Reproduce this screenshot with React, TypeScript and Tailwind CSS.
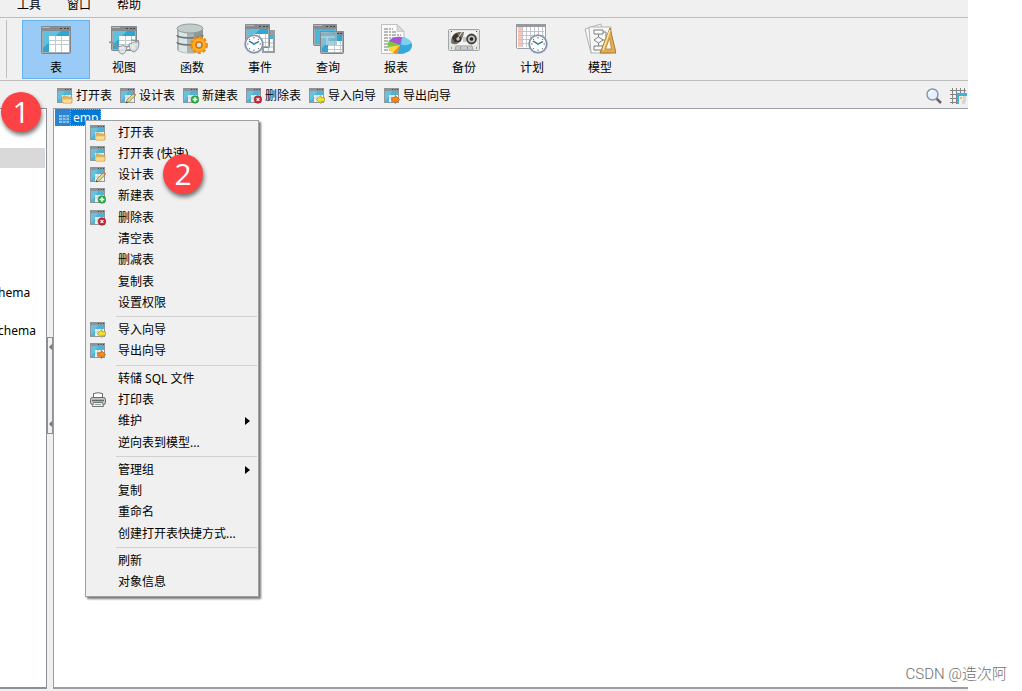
import type { ReactNode } from 'react';

type Badge = 'open' | 'design' | 'add' | 'remove' | 'import' | 'export';

const TableBadge = ({ kind }: { kind?: Badge }) => (
  <svg viewBox="0 0 16 16" className="w-4 h-4 shrink-0" aria-hidden="true">
    <rect x="0.5" y="0.5" width="14" height="14" fill="#eef2f4" stroke="#8f989c" />
    <rect x="0" y="0" width="15" height="3" fill="#8c9499" />
    <path d="M8 1.500h1M10.500 1.500h1M13 1.500h1" stroke="#3f4448" />
    <path d="M1 3h13v4H5v7H1z" fill="#4db4d6" />
    <path d="M1 3h7l-4 7-3 3z" fill="#7ccbe2" opacity=".6" />
    <path d="M5 10h9M8 7v7M11 7v7" stroke="#c3cace" />
    {kind === 'open' && (
      <>
        <path d="M6 8h3l1 1h5v6H6z" fill="#e3b75a" stroke="#c4964a" strokeWidth="0.6" />
        <path d="M5.500 11h9.500l-.6 4H6z" fill="#fbdc90" stroke="#d2a553" strokeWidth="0.5" />
      </>
    )}
    {kind === 'design' && (
      <>
        <path d="M6 15l1-3 7-7 1.700 2-7 7z" fill="#ecd97c" stroke="#857747" strokeWidth="0.7" />
        <path d="M13 6l1.200-1.200 1.600 2-1.200 1.200z" fill="#d9675c" />
        <path d="M6 15l.6-1.800L8 14.400z" fill="#333" />
      </>
    )}
    {kind === 'add' && (
      <>
        <circle cx="12" cy="11.5" r="3.8" fill="#2fae4b" stroke="#1c8a3a" strokeWidth="0.6" />
        <path d="M12 9.200v4.600M9.700 11.500h4.600" stroke="#fff" strokeWidth="1.500" />
      </>
    )}
    {kind === 'remove' && (
      <>
        <circle cx="12" cy="11.5" r="3.8" fill="#c92b38" stroke="#991a24" strokeWidth="0.6" />
        <path d="M10.600 10.100l2.800 2.800M13.400 10.100l-2.800 2.800" stroke="#fff" strokeWidth="1.100" />
      </>
    )}
    {kind === 'import' && (
      <path d="M7.500 11.500l4.500-4v2.200h3.500v3.600H12v2.200z" fill="#f2e32f" stroke="#a79b1d" strokeWidth="0.7" />
    )}
    {kind === 'export' && (
      <path d="M15.700 11.500l-4.500-4v2.200H7.700v3.600h3.500v2.200z" fill="#f58b19" stroke="#b55a0a" strokeWidth="0.7" />
    )}
  </svg>
);

const PrinterIcon = () => (
  <svg viewBox="0 0 16 16" className="w-4 h-4 shrink-0" aria-hidden="true">
    <path d="M3.500 6V1.500q4.500-1.500 9 0V6" fill="#fff" stroke="#666" />
    <rect x="0.5" y="5.500" width="15" height="7" rx="2" fill="#c6c8c9" stroke="#666" />
    <path d="M2 8.500h12" stroke="#666" strokeWidth="1.500" />
    <path d="M3.500 10.500h9l1 4h-11z" fill="#eee" stroke="#777" />
    <path d="M5 12.500h6" stroke="#8aa" />
  </svg>
);

const WindowShape = ({ x, y, w, h }: { x: number; y: number; w: number; h: number }) => (
  <g transform={`translate(${x} ${y})`}>
    <rect x="0.5" y="0.5" width={w - 1} height={h - 1} rx="1" fill="#a7adb0" stroke="#7f868a" />
    <rect width={w} height="5" rx="1" fill="#858b8e" />
    <path d="M1 1.500h8" stroke="#b4b9bb" />
    <path d={`M${w - 11} 2.500h2M${w - 7} 2.500h2M${w - 4} 2.500h2`} stroke="#3e4447" />
    <rect x="2" y="5" width={w - 4} height={h - 7} fill="#2fa6d1" />
    <path d={`M2 5h${w - 12}L2 ${h - 6}z`} fill="#5fc0df" />
    <rect x="8" y="10" width={w - 10} height={h - 12} fill="#fff" />
    <path
      d={`M8 14.500h${w - 10}M8 18.500h${w - 10}M14.500 10v${h - 12}M20.500 10v${h - 12}`}
      stroke="#c2c9cc"
    />
  </g>
);

const ClockShape = ({ x, y }: { x: number; y: number }) => (
  <g transform={`translate(${x} ${y})`}>
    <circle r="9.8" fill="#97a6b8" />
    <circle r="8.4" fill="#fff" stroke="#5c7199" strokeWidth="0.8" />
    <path
      d="M0-7v1.500M0 7V5.500M-7 0h1.500M7 0H5.500M-5-5l1 1M5-5l-1 1M-5 5l1-1M5 5L4 4"
      stroke="#444"
      strokeWidth="0.8"
    />
    <path d="M-5-3L0 0l5-2.500" fill="none" stroke="#2c5f6c" strokeWidth="1.300" />
    <circle r="1.2" fill="#2aa3cf" />
  </g>
);

const BigIcon = ({ children }: { children: ReactNode }) => (
  <svg viewBox="0 0 32 32" className="w-8 h-8" aria-hidden="true">
    {children}
  </svg>
);

const tools: { label: string; active?: boolean; icon: ReactNode }[] = [
  {
    label: '表',
    active: true,
    icon: <WindowShape x={1} y={3} w={30} h={28} />,
  },
  {
    label: '视图',
    icon: (
      <>
        <WindowShape x={3} y={3} w={26} h={25} />
        <path
          d="M1 19l4 1 4 4M31 18l-8-1M17 24l5-1"
          fill="none"
          stroke="#8b9396"
          strokeWidth="1.500"
        />
        <path d="M10 24q5-3 9 0-1 7-5 7-4-1-4-7z" fill="#dfe6e8" fillOpacity=".85" stroke="#8b9598" />
        <path d="M21 21q6-3 10-2 0 8-5 10-5-1-5-8z" fill="#dfe6e8" fillOpacity=".85" stroke="#8b9598" />
      </>
    ),
  },
  {
    label: '函数',
    icon: (
      <>
        <path d="M1 5v21c0 6 26 6 26 0V5z" fill="#aab5b5" />
        <path d="M3 7v21l8 2V8z" fill="#dde4e3" />
        <path d="M18 8v20l9-3V6z" fill="#8b9899" />
        <path d="M1 12c0 4 26 4 26 0M1 19c0 4 26 4 26 0" fill="none" stroke="#64767a" strokeWidth="1.500" />
        <ellipse cx="14" cy="5.500" rx="13" ry="4.500" fill="#c2cdcb" stroke="#8f9d9c" />
        <circle cx="23" cy="22" r="7.5" fill="#ff9f13" stroke="#f28a12" strokeWidth="3" strokeDasharray="3 2" />
        <circle cx="23" cy="22" r="6.500" fill="#ffad22" />
        <circle cx="23" cy="22" r="3" fill="#d9e0df" stroke="#d0721a" strokeWidth="1.500" />
      </>
    ),
  },
  {
    label: '事件',
    icon: (
      <>
        <g transform="translate(18 7)">
          <path d="M0 0h13v23H0z" fill="#979da0" />
          <path d="M2 5h9v16H2z" fill="#f4f8fa" />
          <path d="M2 5h9v4H2z" fill="#42b2d7" />
          <path d="M2 13h9M2 17h9M6.500 9v12" stroke="#b4c0c5" />
        </g>
        <WindowShape x={1} y={1} w={25} h={24} />
        <ClockShape x={10} y={21} />
      </>
    ),
  },
  {
    label: '查询',
    icon: (
      <>
        <WindowShape x={1} y={1} w={24} h={22} />
        <path d="M3 6h20v15H3z" fill="#4bb5d8" />
        <WindowShape x={8} y={8} w={24} h={23} />
        <path d="M9 9h16v13H9z" fill="#8cbccd" opacity=".75" />
        <path d="M9 14h14M15 14v8" stroke="#c5dde6" />
      </>
    ),
  },
  {
    label: '报表',
    icon: (
      <>
        <path d="M1.500 1.500H17l7 7v22H1.500z" fill="#fafafa" stroke="#bdc0c1" />
        <path d="M17 1.500v7h7z" fill="#d9dcdd" stroke="#aaa" strokeWidth=".5" />
        <path
          d="M4 6h9M4 9h12M4 12h17M4 15h17M4 18h12M4 21h8M4 24h7M4 27h6"
          stroke="#757879"
          strokeDasharray="4 1 2 1"
        />
        <ellipse cx="20" cy="22.500" rx="12" ry="8.500" fill="#35a8dc" />
        <path d="M20 22L9 18q4-5 13-4z" fill="#a955d3" />
        <path d="M20 22l-12 2q-1-4 1-6z" fill="#7cc83c" />
        <path d="M20 22l-3 9q-7-1-9-7z" fill="#ffd93a" />
        <path d="M20 22l-3 9-4-1z" fill="#f08a23" />
        <path d="M22 14.500q8 0 9 6-4 3-10 1z" fill="#8ed8f3" opacity=".8" />
      </>
    ),
  },
  {
    label: '备份',
    icon: (
      <>
        <rect x="0.5" y="6.500" width="31" height="21" rx="1" fill="#e2e3e3" stroke="#a2a5a6" />
        <path d="M3 8h26v14H3z" fill="#f3f3f1" />
        <path d="M3 20q-1-8 7-11h6q-1 9-7 12-4 1-6-1z" fill="#79756e" />
        <path d="M4 15q1-4 5-5l2 4-4 6z" fill="#3c3834" />
        <circle cx="10" cy="16" r="2.500" fill="#c5c2bb" stroke="#34302c" strokeWidth="1.500" />
        <path d="M10 15l4-6" stroke="#e1dfda" />
        <circle cx="23.500" cy="16" r="4.500" fill="#bbb" stroke="#45423e" strokeWidth="1.800" />
        <circle cx="23.500" cy="16" r="1.800" fill="#222" />
        <path d="M15 14h3v5h-3z" fill="#c5c7c3" />
        <path d="M7 27l1-4h16l1 4z" fill="#c9cccd" stroke="#a2a6a7" />
        <path d="M3 8.500h1M28 8.500h1M3 25h1M28 25h1M12 25h1M19 25h1" stroke="#4d4d4d" />
      </>
    ),
  },
  {
    label: '计划',
    icon: (
      <>
        <rect x="0.5" y="1.500" width="29" height="24" rx="1" fill="#fff" stroke="#999da1" />
        <path d="M0 1h30v3H0z" fill="#96999d" />
        <path d="M2 4h4v20H2z" fill="#f7c5be" />
        <path
          d="M2 8.500h26M2 12.500h26M2 16.500h26M2 20.500h26M6.500 4v20M10.500 4v20M14.500 4v20M18.500 4v20M22.500 4v20M26.500 4v20"
          stroke="#c3c3cb"
        />
        <ClockShape x={22} y={21} />
      </>
    ),
  },
  {
    label: '模型',
    icon: (
      <>
        <path d="M1 6L17 1l5 24-15 5z" fill="#f6f6f5" stroke="#b2b4b4" />
        <path d="M5 4h22v26H7z" fill="#f8f8f7" stroke="#b0b4b5" />
        <path
          d="M10 7h9v4h-9zM10 23h9v4h-9zM14.500 11v3M14.500 20v3M10 17l4.500-3 4.500 3-4.500 3zM19 17h3V9h-3"
          fill="#fff"
          stroke="#777c7e"
        />
        <path d="M26 5l6 25H16z" fill="#e2ae4e" stroke="#a87935" />
        <path d="M25.500 15l2 11h-6z" fill="#f8f5ea" stroke="#a87935" strokeWidth=".7" />
        <path d="M26 7l-7 20" stroke="#ffe49a" strokeWidth="1.500" />
      </>
    ),
  },
];

const actions: { label: string; badge: Badge }[] = [
  { label: '打开表', badge: 'open' },
  { label: '设计表', badge: 'design' },
  { label: '新建表', badge: 'add' },
  { label: '删除表', badge: 'remove' },
  { label: '导入向导', badge: 'import' },
  { label: '导出向导', badge: 'export' },
];

type MenuItem = { label: string; badge?: Badge; printer?: boolean; submenu?: boolean };

const menuGroups: MenuItem[][] = [
  [
    { label: '打开表', badge: 'open' },
    { label: '打开表 (快速)', badge: 'open' },
    { label: '设计表', badge: 'design' },
    { label: '新建表', badge: 'add' },
    { label: '删除表', badge: 'remove' },
    { label: '清空表' },
    { label: '删减表' },
    { label: '复制表' },
    { label: '设置权限' },
  ],
  [
    { label: '导入向导', badge: 'import' },
    { label: '导出向导', badge: 'export' },
  ],
  [
    { label: '转储 SQL 文件' },
    { label: '打印表', printer: true },
    { label: '维护', submenu: true },
    { label: '逆向表到模型...' },
  ],
  [
    { label: '管理组', submenu: true },
    { label: '复制' },
    { label: '重命名' },
    { label: '创建打开表快捷方式...' },
  ],
  [{ label: '刷新' }, { label: '对象信息' }],
];

const ContextMenu = () => (
  <div
    role="menu"
    className="absolute left-[31px] top-[11px] w-[174px] h-[477px] flex flex-col bg-[#f0f0f0] border border-[#a0a0a0] pt-px pb-[3px] shadow-[2px_2px_2px_#777777]"
  >
    {menuGroups.flatMap((group, g) => [
      g > 0 && (
        <div key={`line-${g}`} className="h-1.5 shrink-0 ml-[30px] mr-px flex items-center">
          <div className="h-px w-full bg-[#d0d0d0]" />
        </div>
      ),
      ...group.map((item) => (
        <button
          key={item.label}
          role="menuitem"
          className="flex-1 min-h-0 flex items-center pl-1 pr-2 text-left whitespace-nowrap"
        >
          <span className="w-7 flex">
            {item.badge && <TableBadge kind={item.badge} />}
            {item.printer && <PrinterIcon />}
          </span>
          <span className="flex-1">{item.label}</span>
          {item.submenu && (
            <svg viewBox="0 0 5 8" className="w-[5px] h-2" aria-hidden="true">
              <path d="M0 0l5 4-5 4z" fill="#000" />
            </svg>
          )}
        </button>
      )),
    ])}
  </div>
);

const Marker = ({ children, className }: { children: ReactNode; className: string }) => (
  <div
    className={`absolute z-10 w-10 h-10 rounded-full bg-[#fc4244] text-white text-3xl flex items-center justify-center font-['Open_Sans',sans-serif] shadow-[1px_3px_4px_#00000088] ${className}`}
  >
    {children}
  </div>
);

export default function App() {
  return (
    <div className="relative h-screen overflow-hidden bg-white pr-[54px] text-black text-xs font-['Noto_Sans','Noto_Sans_CJK_SC',sans-serif]">
      <div className="h-full flex flex-col bg-[#f0f0f0]">
        <nav className="h-[18px] shrink-0 flex items-center gap-[26px] pl-[17px] pb-2 border-b border-[#bdbdbd] leading-4">
          {['工具', '窗口', '帮助'].map((label) => (
            <button key={label}>{label}</button>
          ))}
        </nav>

        <div className="h-[63px] shrink-0 flex items-center border-b border-[#bdbdbd]">
          <div className="ml-1.5 mr-[15px] w-px h-[58px] bg-[#bdbdbd]" />
          {tools.map((tool) => (
            <button
              key={tool.label}
              className={`w-[68px] h-[59px] flex flex-col items-center gap-[5px] pt-0.5 border leading-4 ${
                tool.active ? 'bg-[#99cbf6] border-[#62b2ef]' : 'border-transparent'
              }`}
            >
              <BigIcon>{tool.icon}</BigIcon>
              {tool.label}
            </button>
          ))}
        </div>

        <div className="h-[26px] shrink-0 flex items-center gap-2 pl-[57px] pr-px pt-[3px]">
          {actions.map((action) => (
            <button key={action.label} className="flex items-center gap-[3px] whitespace-nowrap">
              <TableBadge kind={action.badge} />
              {action.label}
            </button>
          ))}
          <button className="ml-auto" aria-label="搜索">
            <svg viewBox="0 0 16 16" className="w-4 h-4">
              <path d="M10 10l5 5" stroke="#686868" strokeWidth="2.500" />
              <circle cx="6.500" cy="6.500" r="5.500" fill="#e5efff" stroke="#8992a7" strokeWidth="1.400" />
              <path d="M3 6q1-3 4-3" fill="none" stroke="#fff" strokeWidth="1.500" />
            </svg>
          </button>
          <button aria-label="网格">
            <svg viewBox="0 0 17 16" className="w-[17px] h-4">
              <path d="M0 2.500h16M0 6.500h16M0 10.500h8M0 14.500h8M2.500 0v16M6.500 0v16M10.500 0v5M14.500 0v5" stroke="#858585" />
              <path d="M7 5h10v11H7z" fill="#f0f0f0" />
              <path d="M7 5h10v3H9v8H7z" fill="#3bb3df" />
              <path d="M10 9h2v2h-2z" fill="#f2bd36" />
              <path d="M13 9h3M13 11h3M12 13h4M12 15h3" stroke="#bbb" />
            </svg>
          </button>
        </div>

        <div className="flex-1 min-h-0 flex pt-px pb-0.5">
          <aside className="w-[47px] shrink-0 bg-white border-t border-r border-b-2 border-[#8c9198] pt-[39px] overflow-hidden leading-5">
            <div className="h-5 mr-px bg-[#d9d9d9]" />
            <div className="pt-[115px] -ml-0.5 flex flex-col gap-[18px]">
              <span>hema</span>
              <span>chema</span>
            </div>
          </aside>
          <div className="w-1.5 shrink-0 pt-[229px]">
            <div className="h-[97px] border border-[#8c9198] flex flex-col justify-between items-center py-1.5">
              {['up', 'down'].map((key) => (
                <svg key={key} viewBox="0 0 3 6" className="w-[3px] h-1.5" aria-hidden="true">
                  <path d="M3 0v6L0 3z" fill="#777" />
                </svg>
              ))}
            </div>
          </div>
          <main className="relative flex-1 bg-white border-l border-t border-b-2 border-[#9b9da4]">
            <div className="flex h-[17px] ml-px text-white">
              <span className="bg-[#2b84cf] flex w-[15px] items-center justify-end">
                <svg viewBox="0 0 12 10" className="w-3 h-2.5" aria-hidden="true">
                  <path d="M1 2h10v8H1z" fill="#8fc3ec" />
                  <path d="M1 4.500h10M1 7.500h10M4.500 2v8M8 2v8" stroke="#4192d7" />
                </svg>
              </span>
              <span className="bg-[#0078d7] border border-dotted border-[#ff963d] px-0.5 leading-[15px]">
                emp
              </span>
            </div>
            <ContextMenu />
            <Marker className="left-[109px] top-[45px]">2</Marker>
          </main>
        </div>
      </div>
      <Marker className="left-px top-[92px]">1</Marker>
      <div className="absolute right-[15px] bottom-1.5 text-[15px] font-light text-[#6e6e6e] font-['Roboto','Noto_Sans_CJK_SC',sans-serif]">
        CSDN @造次阿
      </div>
    </div>
  );
}
